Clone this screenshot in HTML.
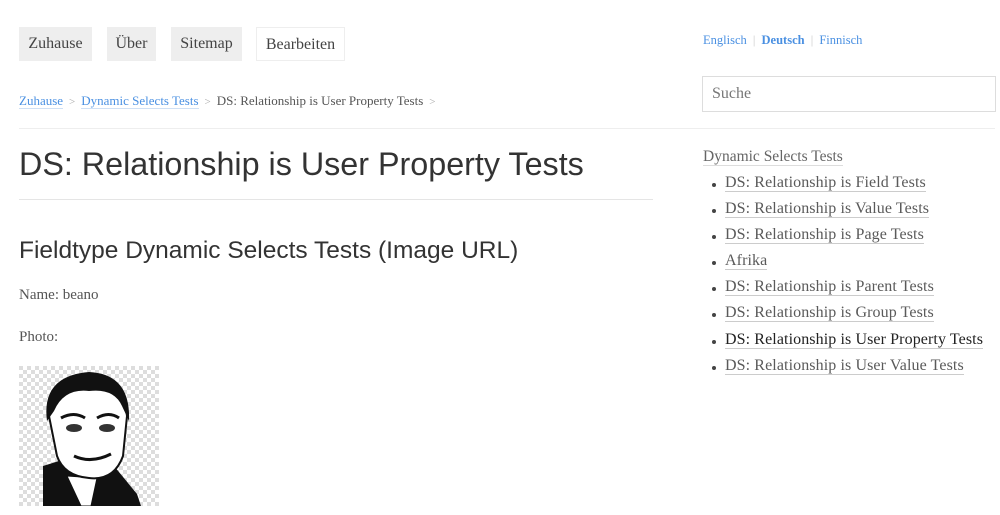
<!DOCTYPE html>
<html><head><meta charset="utf-8">
<style>
*{margin:0;padding:0;box-sizing:border-box}
body{width:1000px;height:515px;overflow:hidden;background:#fff;font-family:"Liberation Serif",serif;color:#555;position:relative}
.a{position:absolute;white-space:nowrap}
.btn{position:absolute;top:27px;height:34px;line-height:33px;background:#eee;color:#444;font-size:16px;text-align:center}
.bc{top:93px;font-size:13px}
.bc a{color:#4a90e2;text-decoration:none;border-bottom:1px solid #cfe0f5}
.sep{color:#aaa;margin:0 6px;font-size:11px}
h1,h2{font-family:"Liberation Sans",sans-serif;font-weight:normal;color:#333}
.side li{position:absolute;left:725px;font-size:16px;letter-spacing:0.1px;list-style:none;color:#5a5a5a}
.side li span{border-bottom:1px solid #ccc}
.side li:before{content:"";position:absolute;left:-13px;top:9px;width:4px;height:4px;border-radius:50%;background:#444}
</style></head><body>
<div class="btn" style="left:19px;width:73px">Zuhause</div>
<div class="btn" style="left:107px;width:49px">Über</div>
<div class="btn" style="left:171px;width:71px">Sitemap</div>
<div class="btn" style="left:256px;width:89px;background:#fff;border:1px solid #eee">Bearbeiten</div>
<div class="a bc" style="left:19px"><a>Zuhause</a><span class="sep">&gt;</span><a>Dynamic Selects Tests</a><span class="sep">&gt;</span><span style="color:#555">DS: Relationship is User Property Tests</span><span class="sep">&gt;</span></div>
<div class="a" style="left:19px;right:5px;top:128px;border-top:1px solid #eee"></div>
<h1 class="a" style="left:19px;top:146px;font-size:32.3px">DS: Relationship is User Property Tests</h1>
<div class="a" style="left:19px;width:634px;top:199px;border-top:1px solid #e5e5e5"></div>
<h2 class="a" style="left:19px;top:237px;font-size:24.5px">Fieldtype Dynamic Selects Tests (Image URL)</h2>
<div class="a" style="left:19px;top:287px;font-size:15px">Name: beano</div>
<div class="a" style="left:19px;top:329px;font-size:15px">Photo:</div>
<svg class="a" style="left:19px;top:366px" width="140" height="140" viewBox="0 0 140 140">
<defs><pattern id="c" width="8" height="8" patternUnits="userSpaceOnUse"><rect width="8" height="8" fill="#fff"/><rect width="4" height="4" fill="#ddd"/><rect x="4" y="4" width="4" height="4" fill="#ddd"/></pattern></defs>
<rect width="140" height="140" fill="url(#c)"/>
<path d="M24 140 L24 100 L40 95 L55 108 L70 112 L95 100 L118 128 L122 140Z" fill="#111"/>
<path d="M48 110 L62 140 L72 140 L78 112Z" fill="#fff" stroke="#111"/>
<path d="M30 50 Q28 10 70 8 Q105 10 108 50 L104 90 Q95 115 70 112 Q45 110 38 90Z" fill="#fff" stroke="#111" stroke-width="2"/>
<path d="M28 55 Q22 10 70 6 Q112 8 110 55 L103 40 Q95 22 70 25 Q45 22 35 45Z" fill="#111"/>
<ellipse cx="55" cy="62" rx="8" ry="4" fill="#333"/><ellipse cx="88" cy="62" rx="8" ry="4" fill="#333"/>
<path d="M42 52 Q55 45 66 52 M78 52 Q90 45 100 52 M55 90 Q72 98 92 88" stroke="#111" stroke-width="3" fill="none"/>
</svg>
<div class="a" style="left:703px;top:33px;font-size:12.5px;color:#4a90e2">Englisch <span style="color:#ccc;margin:0 3px">|</span> <b>Deutsch</b> <span style="color:#ccc;margin:0 3px">|</span> Finnisch</div>
<div class="a" style="left:702px;top:76px;width:294px;height:36px;border:1px solid #ddd;font-size:16px;color:#777;padding:8px 9px">Suche</div>
<div class="a" style="left:703px;top:148px;font-size:15.5px;color:#666"><span style="border-bottom:1px solid #ddd">Dynamic Selects Tests</span></div>
<ul class="side">
<li style="top:174px"><span>DS: Relationship is Field Tests</span></li>
<li style="top:200px"><span>DS: Relationship is Value Tests</span></li>
<li style="top:226px"><span>DS: Relationship is Page Tests</span></li>
<li style="top:252px"><span>Afrika</span></li>
<li style="top:278px"><span>DS: Relationship is Parent Tests</span></li>
<li style="top:304px"><span>DS: Relationship is Group Tests</span></li>
<li style="top:331px;color:#222"><span>DS: Relationship is User Property Tests</span></li>
<li style="top:357px"><span>DS: Relationship is User Value Tests</span></li>
</ul>
</body></html>
